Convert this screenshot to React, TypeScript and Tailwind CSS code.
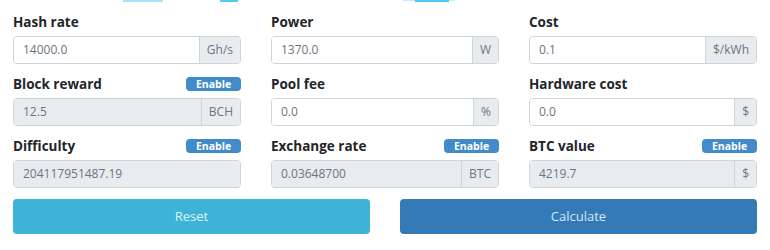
import React from 'react';

type Field = {
  label: string;
  value: string;
  unit?: string;
  toggle?: boolean;
};

const fields: Field[] = [
  { label: 'Hash rate', value: '14000.0', unit: 'Gh/s' },
  { label: 'Power', value: '1370.0', unit: 'W' },
  { label: 'Cost', value: '0.1', unit: '$/kWh' },
  { label: 'Block reward', value: '12.5', unit: 'BCH', toggle: true },
  { label: 'Pool fee', value: '0.0', unit: '%' },
  { label: 'Hardware cost', value: '0.0', unit: '$' },
  { label: 'Difficulty', value: '204117951487.19', toggle: true },
  { label: 'Exchange rate', value: '0.03648700', unit: 'BTC', toggle: true },
  { label: 'BTC value', value: '4219.7', unit: '$', toggle: true },
];

// bottom edge of the graphic above, cut off by the viewport
const TopStrip = () => (
  <svg width="770" height="3" className="block">
    <rect x="123" y="0" width="40" height="2" fill="#a9e3f5" />
    <rect x="220" y="0" width="18" height="2" fill="#4fcdf0" />
    <rect x="403" y="0" width="12" height="1" fill="#bfeaf7" />
    <rect x="415" y="0" width="34" height="2" fill="#52c6ee" />
    <rect x="449" y="0" width="6" height="1" fill="#c7edf8" />
  </svg>
);

function InputField({ f }: { f: Field }) {
  const disabled = !!f.toggle;
  return (
    <div className="flex flex-col">
      <div className="flex h-[20px] items-center justify-between">
        <span className="text-[13.5px] font-bold text-[#212529]">{f.label}</span>
        {f.toggle && (
          <span className="flex h-[14px] w-[55px] items-center justify-center rounded-[4px] bg-[#428bca] text-[10.5px] font-bold leading-none text-white">
            Enable
          </span>
        )}
      </div>
      <div className="mt-[4px] flex h-[28px] rounded-[4px] border border-[#ced4da] text-[12px] text-[#6c757d]">
        <div
          className={
            'flex flex-1 items-center rounded-l-[3px] pl-[9px] ' +
            (disabled ? 'bg-[#e9ecef]' : 'bg-white') +
            (f.unit ? '' : ' rounded-r-[3px]')
          }
        >
          {f.value}
        </div>
        {f.unit && (
          <div className="flex items-center rounded-r-[3px] border-l border-[#ced4da] bg-[#e9ecef] px-[7px] text-[12px] text-[#6c757d]">
            {f.unit}
          </div>
        )}
      </div>
    </div>
  );
}

export default function App() {
  return (
    <div
      className="h-[250px] w-[770px] overflow-hidden bg-white"
      style={{ fontFamily: '"Open Sans", "Noto Sans", sans-serif' }}
    >
      <TopStrip />
      <div className="grid grid-cols-3 gap-x-[30px] gap-y-[10px] px-[13px] pt-[9px]">
        {fields.map((f) => (
          <InputField key={f.label} f={f} />
        ))}
      </div>
      <div className="mt-[11px] grid grid-cols-2 gap-x-[30px] px-[13px]">
        <button className="h-[35px] rounded-[4px] bg-[#3db4d7] text-[13px] text-[#dff3f9]">Reset</button>
        <button className="h-[35px] rounded-[4px] bg-[#337ab7] text-[13px] text-[#dbe7f2]">Calculate</button>
      </div>
    </div>
  );
}
